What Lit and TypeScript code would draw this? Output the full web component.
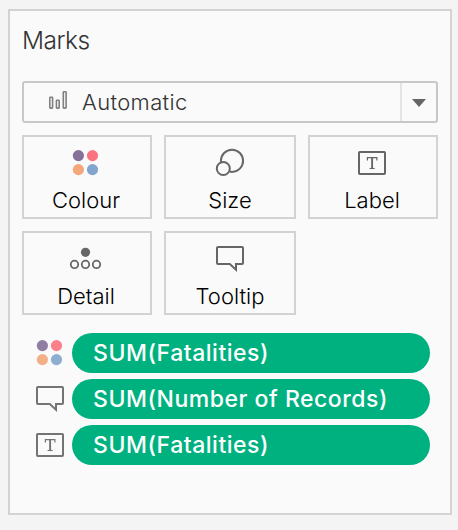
import { LitElement, html, css, svg } from "lit";
import { customElement, property } from "lit/decorators.js";

type IconName = "colour" | "size" | "label" | "detail" | "tooltip";

const ICONS = {
  colour: svg`
    <circle cx="10.4" cy="8.6" r="5.6" fill="#85709a"/>
    <circle cx="24.5" cy="8.6" r="5.6" fill="#fa7381"/>
    <circle cx="10.4" cy="22.6" r="5.6" fill="#f3a77b"/>
    <circle cx="24.5" cy="22.6" r="5.6" fill="#82a5cd"/>`,
  size: svg`
    <circle cx="20" cy="13.8" r="11.1"/>
    <circle cx="11.3" cy="21.5" r="6.5" fill="#fafafa"/>`,
  label: svg`
    <rect x="5" y="5" width="26" height="22" rx="0.8"/>
    <path d="M13.4 13.4V10.6H22.9V13.4" stroke-width="1.2"/>
    <path d="M18.1 10.6V21.4" stroke-width="1.9"/>
    <path d="M15.6 21.5H20.7" stroke-width="1.1"/>`,
  detail: svg`
    <circle cx="17.5" cy="9.3" r="4.6" fill="#666" stroke="none"/>
    <circle cx="6.5" cy="21.4" r="3.7" stroke-width="1.8"/>
    <circle cx="17.5" cy="21.4" r="3.7" stroke-width="1.8"/>
    <circle cx="28.5" cy="21.4" r="3.7" stroke-width="1.8"/>`,
  tooltip: svg`
    <path d="M6 4H30Q31 4 31 5V20Q31 21 30 21H24V26.8L17.8 21H6Q5 21 5 20V5Q5 4 6 4Z"/>`,
};

@customElement("mark-icon")
class MarkIcon extends LitElement {
  @property() name: IconName = "colour";

  static styles = css`
    :host { display: block; width: 36px; height: 32px; }
    .icon { display: block; fill: none; stroke: #666; stroke-width: 2; }
    .plain { stroke: none; }
  `;

  render() {
    return html`<svg class="icon ${this.name === "colour" ? "plain" : ""}" width="36" height="32" viewBox="0 0 36 32">
      ${ICONS[this.name]}
    </svg>`;
  }
}

@customElement("app-root")
class AppRoot extends LitElement {
  private cards: { icon: IconName; text: string }[] = [
    { icon: "colour", text: "Colour" },
    { icon: "size", text: "Size" },
    { icon: "label", text: "Label" },
    { icon: "detail", text: "Detail" },
    { icon: "tooltip", text: "Tooltip" },
  ];

  private pills: { icon: IconName; text: string }[] = [
    { icon: "colour", text: "SUM(Fatalities)" },
    { icon: "tooltip", text: "SUM(Number of Records)" },
    { icon: "label", text: "SUM(Fatalities)" },
  ];

  static styles = css`
    :host {
      display: block;
      box-sizing: border-box;
      height: 530px;
      padding: 9px 6px 15px 8px;
      background: #f4f4f4;
      font-family: Inter, "Liberation Sans", sans-serif;
      font-weight: 300;
      white-space: nowrap;
    }
    * { box-sizing: border-box; }
    .panel {
      height: 506px;
      padding: 12px;
      border: 2px solid #d3d3d3;
      background: #fafafa;
    }
    .title {
      height: 58px;
      font-size: 24.5px;
      line-height: 34px;
      letter-spacing: -0.5px;
      color: #333;
    }
    .select {
      display: flex;
      height: 42px;
      border: 2px solid #c8c8c8;
      border-radius: 3px;
      color: #333;
    }
    .bars { width: 20px; height: 20px; margin: 7px 0 0 24px; fill: none; stroke: #808080; stroke-width: 1.6; }
    .value { flex: 1; margin-left: 14px; font-size: 22px; line-height: 38px; letter-spacing: 0.35px; }
    .arrow {
      display: flex;
      justify-content: center;
      width: 36px;
      padding: 16px 1px 0 0;
      border-left: 2px solid #e4e4e4;
    }
    .cards {
      display: grid;
      grid-template-columns: 130px 132px 130px;
      grid-auto-rows: 84px;
      gap: 12px;
      margin-top: 12px;
    }
    .card {
      display: flex;
      flex-direction: column;
      align-items: center;
      padding: 10px 2px 0 0;
      border: 2px solid #d3d3d3;
      color: #000;
      font-size: 22px;
    }
    .card:nth-child(3n + 2) { padding-right: 0; }
    .caption { line-height: 42px; }
    .pills { display: grid; gap: 6px; margin: 18px 8px 0 10px; }
    .row { display: flex; align-items: center; height: 40px; }
    .row mark-icon { opacity: 0.9; }
    .pill {
      flex: 1;
      height: 40px;
      margin-left: 4px;
      padding-left: 21px;
      border-radius: 20px;
      background: #00b180;
      color: #fff;
      font-size: 23px;
      font-weight: 500;
      line-height: 40px;
      letter-spacing: 0.52px;
    }
  `;

  render() {
    return html`
      <section class="panel">
        <div class="title">Marks</div>
        <div class="select">
          <svg class="bars" viewBox="0 0 20 20">
            <rect x="1.8" y="7.3" width="2.8" height="10.8" rx="0.6"/>
            <rect x="8.4" y="10.3" width="2.8" height="7.8" rx="0.6"/>
            <rect x="15.3" y="1.8" width="2.8" height="16.3" rx="0.6"/>
          </svg>
          <span class="value">Automatic</span>
          <span class="arrow">
            <svg width="14" height="8" viewBox="0 0 14 8"><path d="M0 0H14L7 8Z" fill="#666"/></svg>
          </span>
        </div>
        <div class="cards">
          ${this.cards.map((c) => html`
            <div class="card">
              <mark-icon name=${c.icon}></mark-icon>
              <span class="caption">${c.text}</span>
            </div>`)}
        </div>
        <div class="pills">
          ${this.pills.map((p) => html`
            <div class="row">
              <mark-icon name=${p.icon}></mark-icon>
              <span class="pill">${p.text}</span>
            </div>`)}
        </div>
      </section>
    `;
  }
}
